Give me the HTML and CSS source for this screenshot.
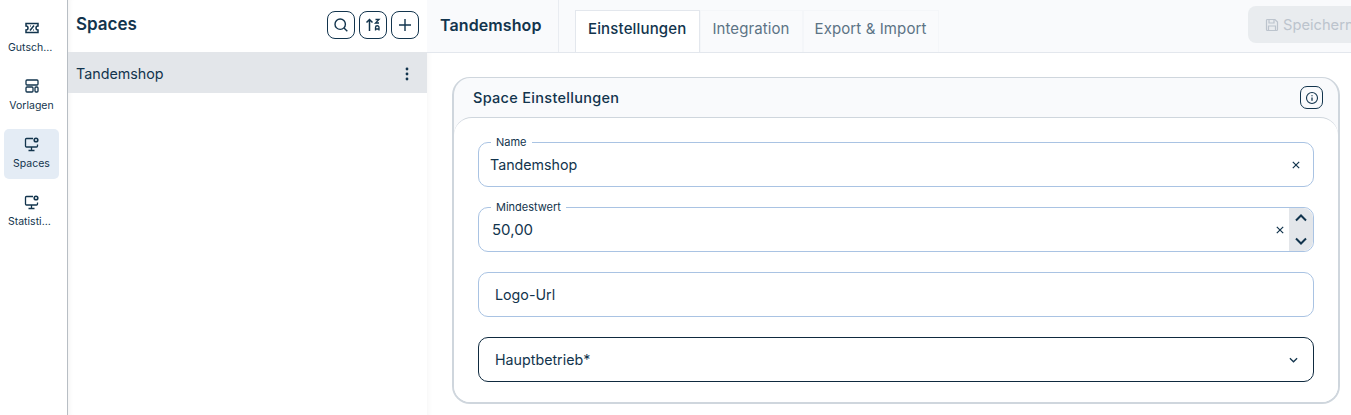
FILE: index.html
```html
<!DOCTYPE html>
<html lang="de">
<head>
<meta charset="utf-8">
<title>Spaces</title>
<link rel="stylesheet" href="styles.css">
</head>
<body>
<div class="app">
  <nav class="rail">
    <a class="rail-item">
      <svg class="rail-icon" viewBox="0 0 16 16" fill="none" stroke="#12344d" stroke-width="1.500"><path d="M2 3.500h12v2.500a2 2 0 0 0 0 4v2.500H2V10a2 2 0 0 0 0-4z"/><path d="M6 10.500 10 5.500M6 6h.7M9.300 10h.7"/></svg>
      <span class="rail-label">Gutscheine</span>
    </a>
    <a class="rail-item">
      <svg class="rail-icon" viewBox="0 0 16 16" fill="none" stroke="#12344d" stroke-width="1.300"><rect x="2" y="2" width="12" height="5" rx="1"/><rect x="2" y="9" width="7" height="5" rx="1"/><rect x="11" y="9" width="3" height="5" rx="1"/></svg>
      <span class="rail-label">Vorlagen</span>
    </a>
    <a class="rail-item active">
      <svg class="rail-icon" viewBox="0 0 16 16" fill="none" stroke="#12344d" stroke-width="1.300"><path d="M9 2.500H2.500a1 1 0 0 0-1 1V10a1 1 0 0 0 1 1h10a1 1 0 0 0 1-1V8.500M7.500 11v3M4.500 14.500h6"/><circle cx="12" cy="4" r="1.800" stroke-width="1.600"/></svg>
      <span class="rail-label">Spaces</span>
    </a>
    <a class="rail-item">
      <svg class="rail-icon" viewBox="0 0 16 16" fill="none" stroke="#12344d" stroke-width="1.300"><path d="M9 2.500H2.500a1 1 0 0 0-1 1V10a1 1 0 0 0 1 1h10a1 1 0 0 0 1-1V8.500M7.500 11v3M4.500 14.500h6"/><circle cx="12" cy="4" r="1.800" stroke-width="1.600"/></svg>
      <span class="rail-label">Statistiken</span>
    </a>
  </nav>

  <aside class="list-panel">
    <header class="list-head">
      <h1 class="list-title">Spaces</h1>
      <div class="list-actions">
        <button class="icon-btn"><svg viewBox="0 0 16 16" width="16" height="16" fill="none" stroke="#12344d" stroke-width="1.400"><circle cx="7.200" cy="7.200" r="5.200"/><path d="m11 11 3.300 3.300"/></svg></button>
        <button class="icon-btn"><svg viewBox="0 0 18 18" width="18" height="18" fill="none" stroke="#12344d" stroke-width="1.500"><path d="M5.500 15V3.500M2.500 6.500l3-3 3 3"/><path d="M11.500 3.500h3.500l-3.500 3.500h3.500M11.500 14.500v-3a1.750 1.750 0 0 1 3.500 0v3M11.500 13h3.500" stroke-width="1.300"/></svg></button>
        <button class="icon-btn"><svg viewBox="0 0 16 16" width="16" height="16" fill="none" stroke="#12344d" stroke-width="1.400"><path d="M8 2v12M2 8h12"/></svg></button>
      </div>
    </header>
    <div class="list-row">
      <span>Tandemshop</span>
      <svg width="4" height="14" viewBox="0 0 4 14" fill="#12344d"><circle cx="2" cy="2" r="1.400"/><circle cx="2" cy="7" r="1.400"/><circle cx="2" cy="12" r="1.400"/></svg>
    </div>
  </aside>

  <main class="main">
    <header class="top">
      <div class="top-title">Tandemshop</div>
      <div class="tabs">
        <span class="tab selected">Einstellungen</span>
        <span class="tab">Integration</span>
        <span class="tab">Export &amp; Import</span>
      </div>
      <button class="save">
        <svg viewBox="0 0 14 14" width="14" height="14" fill="none" stroke="#bcc4cd" stroke-width="1.200"><path d="M1.500 2.500a1 1 0 0 1 1-1h7.500l2.500 2.500v7.500a1 1 0 0 1-1 1h-9a1 1 0 0 1-1-1z"/><path d="M4 1.500V5h5V1.500M3.500 12.500V8h7v4.500"/></svg>
        <span>Speichern</span>
      </button>
    </header>

    <div class="content">
      <section class="card">
        <div class="card-head">
          <h2 class="card-title">Space Einstellungen</h2>
          <button class="info-btn"><svg viewBox="0 0 14 14" width="14" height="14" fill="none" stroke="#12344d" stroke-width="1.100"><circle cx="7" cy="7" r="5.500"/><path d="M7 6.500v3.200M7 4.200v1" stroke-width="1.300"/></svg></button>
        </div>
        <div class="card-body">
          <div class="field">
            <label class="legend">Name</label>
            <span class="value text">Tandemshop</span>
            <svg class="clear" viewBox="0 0 8 8" width="8" height="8" fill="none" stroke="#12344d" stroke-width="1.200"><path d="m.8.800 6.400 6.400M7.200.800.800 7.200"/></svg>
          </div>
          <div class="field number">
            <label class="legend">Mindestwert</label>
            <span class="value">50,00</span>
            <svg class="clear" viewBox="0 0 8 8" width="8" height="8" fill="none" stroke="#12344d" stroke-width="1.200"><path d="m.8.800 6.400 6.400M7.200.800.800 7.200"/></svg>
            <div class="stepper">
              <svg viewBox="0 0 12 8" width="12" height="8" fill="none" stroke="#12344d" stroke-width="2"><path d="m1 6.500 5-5 5 5"/></svg>
              <svg viewBox="0 0 12 8" width="12" height="8" fill="none" stroke="#12344d" stroke-width="2"><path d="m1 1.500 5 5 5-5"/></svg>
            </div>
          </div>
          <div class="field plain">
            <span class="text">Logo-Url</span>
          </div>
          <div class="field plain required">
            <span class="text">Hauptbetrieb*</span>
            <svg viewBox="0 0 10 6" width="9" height="6" fill="none" stroke="#12344d" stroke-width="1.400"><path d="m1 1 4 4 4-4"/></svg>
          </div>
        </div>
      </section>
    </div>
  </main>
</div>
</body>
</html>
```
FILE: styles.css
```css
* { box-sizing: border-box; }
html, body { margin: 0; height: 100%; overflow: hidden; }
body { font-family: Inter, "Liberation Sans", sans-serif; color: #12344d; background: #fff; }
h1, h2 { margin: 0; }
button { font: inherit; padding: 0; background: none; }

.app { display: flex; width: 1351px; height: 415px; overflow: hidden; }

.rail { flex: 0 0 68px; border-right: 1px solid #b8bec4; padding: 13px 8px 0 4px; display: flex; flex-direction: column; gap: 8px; }
.rail-item { width: 55px; height: 50px; flex: none; border-radius: 5px; display: flex; flex-direction: column; align-items: center; padding-top: 7px; gap: 5px; }
.rail-item.active { background: #e4ecf5; }
.rail-icon { width: 16px; height: 16px; flex: none; }
.rail-label { max-width: 47px; font-size: 10.500px; line-height: 14px; white-space: nowrap; overflow: hidden; text-overflow: ellipsis; }

.list-panel { flex: 0 0 359px; background: #fff; box-shadow: inset 6px 0 6px -6px rgba(0,0,0,.08); }
.list-head { height: 52px; display: flex; align-items: center; justify-content: space-between; padding: 0 8px 4px 8px; }
.list-title { font-size: 17px; font-weight: 600; }
.list-actions { display: flex; gap: 4px; padding-top: 2px; }
.icon-btn { width: 28px; height: 28px; border: 1px solid #12344d; border-radius: 8px; display: flex; align-items: center; justify-content: center; }
.list-row { height: 41px; background: #e3e6ea; display: flex; align-items: center; justify-content: space-between; padding: 2px 18px 0 8px; font-size: 14.300px; }

.main { flex: 0 0 924px; box-shadow: inset 6px 0 6px -6px rgba(0,0,0,.06); }
.top { height: 53px; background: #f9fafc; border-bottom: 1px solid #e3e7ed; display: flex; overflow: hidden; }
.top-title { width: 132px; border-right: 1px solid #e9ecf1; padding: 15px 0 0 13px; font-size: 16px; font-weight: 600; letter-spacing: .1px; flex: none; }
.tabs { display: flex; padding: 10px 0 0 16px; }
.tab { height: 43px; padding: 8px 12px 0 11px; font-size: 15px; letter-spacing: .1px; color: #5c7385; border: 1px solid #f4f6f9; border-bottom: 0; white-space: nowrap; }
.tab.selected { color: #12344d; background: #fff; border-color: #e3e7ed; font-weight: 500; padding: 8px 13px 0 12px; letter-spacing: .15px; }
.save { margin: 6px -37px 0 auto; width: 140px; height: 37px; border: 0; border-radius: 8px 0 0 8px; background: #e9ecef; color: #bcc4cd; display: flex; align-items: center; gap: 4px; padding-left: 17px; font-size: 14.700px; white-space: nowrap; flex: none; }

.content { padding: 24px 11px 0 25px; }
.card { width: 888px; height: 327px; border: 2px solid #cfd6dd; border-top-width: 1px; border-radius: 18px; background: #f9fafc; }
.card-head { height: 39px; display: flex; align-items: center; justify-content: space-between; padding: 0 15px 0 19px; }
.card-title { font-size: 14.500px; font-weight: 500; letter-spacing: .3px; }
.info-btn { width: 23px; height: 23px; border: 1px solid #12344d; border-radius: 7px; display: flex; align-items: center; justify-content: center; }
.card-body { height: 285px; background: #fff; border-top: 1px solid #cfd6dd; border-radius: 18px 18px 16px 16px; padding: 24px 24px 0; display: flex; flex-direction: column; gap: 20px; }

.field { position: relative; height: 45px; flex: none; border: 1px solid #a9c3e3; border-radius: 10px; display: flex; align-items: center; padding: 0 13px 0 11px; font-size: 15px; }
.legend { position: absolute; left: 12px; top: -8px; padding: 0 5px; font-size: 11px; line-height: 14px; background: #fff; }
.value { flex: 1; }
.text { font-size: 14.250px; }
.number { padding: 0 0 0 13px; }
.number .clear { margin-right: 5px; }
.stepper { width: 24px; align-self: stretch; background: #e3e6ea; border-radius: 0 10px 10px 0; display: flex; flex-direction: column; align-items: center; justify-content: space-between; padding: 6px 0; }
.plain { padding: 0 15px 0 16px; justify-content: space-between; }
.required { border-color: #0f2a3f; }
```
